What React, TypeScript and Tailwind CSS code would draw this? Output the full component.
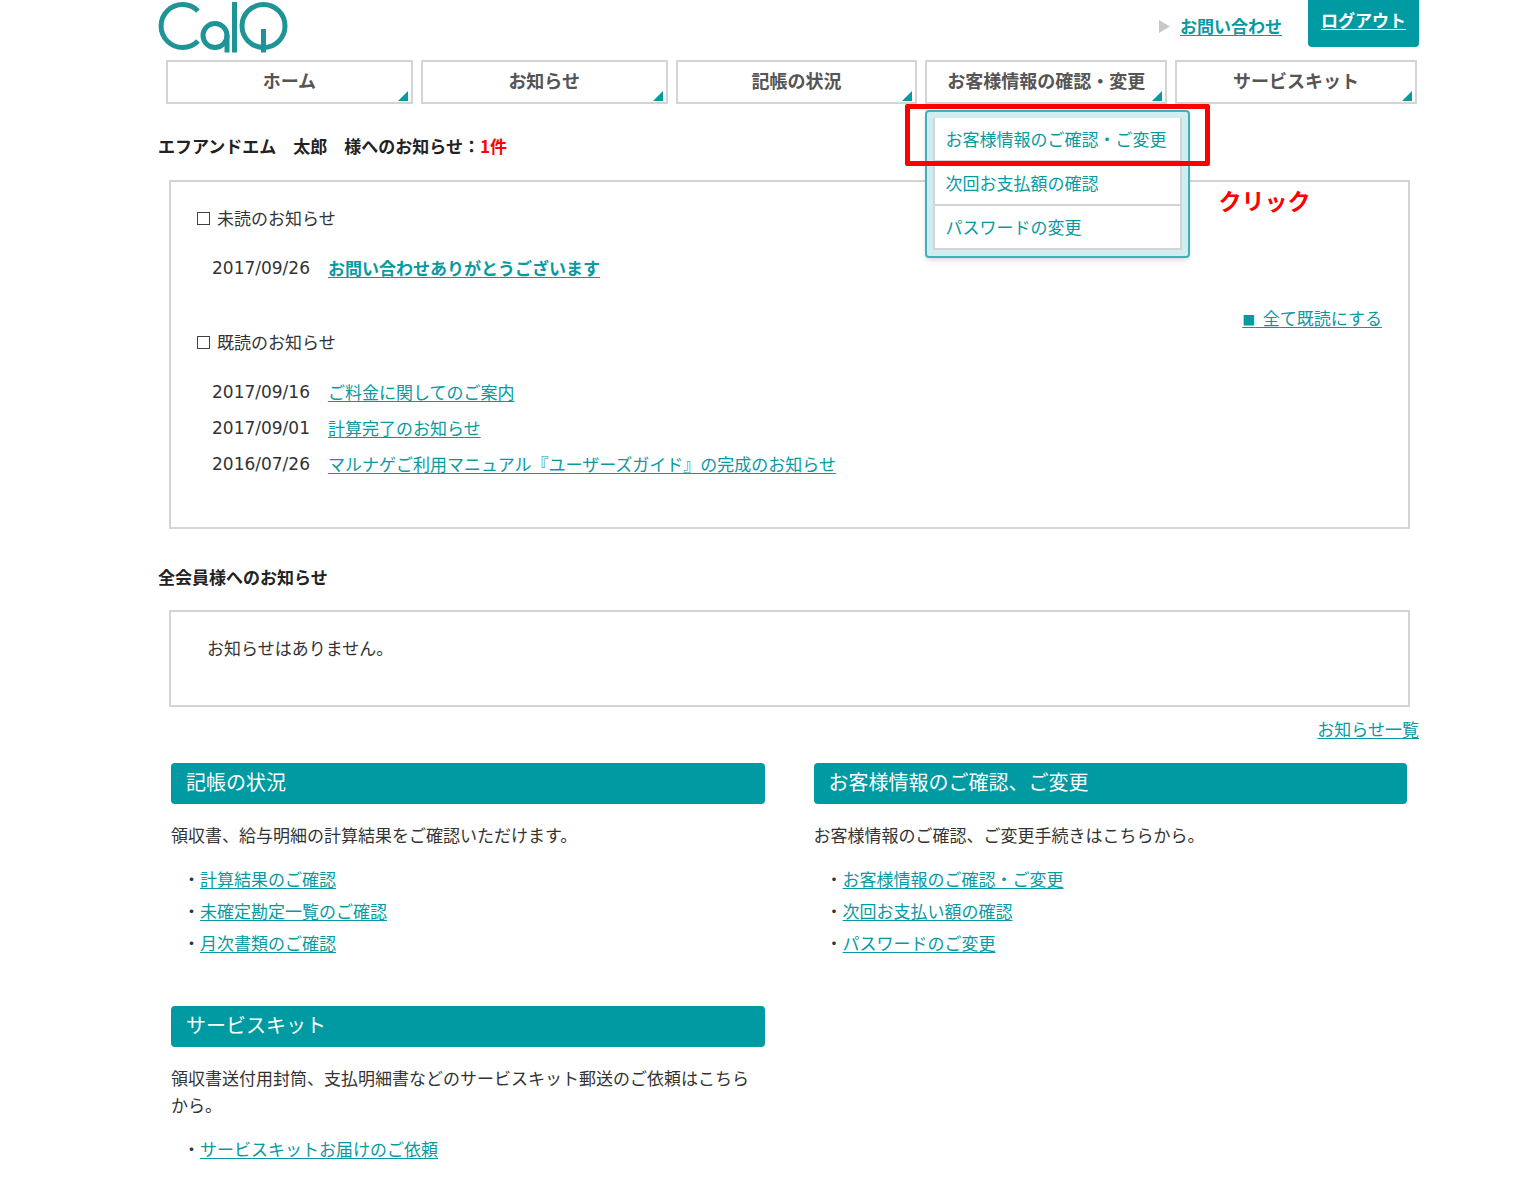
import type { ReactNode } from "react";

type Notice = { date: string; title: string };

const readNotices: Notice[] = [
  { date: "2017/09/16", title: "ご料金に関してのご案内" },
  { date: "2017/09/01", title: "計算完了のお知らせ" },
  { date: "2016/07/26", title: "マルナゲご利用マニュアル『ユーザーズガイド』の完成のお知らせ" },
];

const customerMenu = ["お客様情報のご確認・ご変更", "次回お支払額の確認", "パスワードの変更"];

const link = "text-[#089aa0] underline decoration-1 underline-offset-2";

function Logo() {
  return (
    <svg width="130" height="53" viewBox="0 0 130 53" fill="none" stroke="#1f9496" strokeWidth="5" role="img" aria-label="CalQ">
      <path d="M40 11A21.5 21.5 0 1 0 40 41" />
      <circle cx="57" cy="35.5" r="12" />
      <path d="M69 35v17.5" />
      <path d="M76.5 2v50.5" />
      <circle cx="105.5" cy="26" r="21.5" />
      <path d="M105.5 29v23.5" />
    </svg>
  );
}

function NavItem({ label, children }: { label: string; children?: ReactNode }) {
  return (
    <li className="relative">
      <a href="#" className="relative block h-11 border-2 border-[#d4d4d4] text-center text-[18px] leading-9 font-bold whitespace-nowrap text-[#555]">
        {label}
        <svg className="absolute right-[3px] bottom-px" width="10" height="10" viewBox="0 0 10 10" aria-hidden="true">
          <path d="M10 0v10H0z" fill="#089aa0" />
        </svg>
      </a>
      {children}
    </li>
  );
}

function CustomerMenu() {
  return (
    <>
      <ul className="absolute top-[50px] left-0 z-10 w-[265px] rounded border-2 border-[#3db3b8] bg-[#d0eef0] p-1.5 shadow-md">
        {customerMenu.map((m) => (
          <li key={m} className="h-11 border-x-2 border-b-2 border-[#d4d4d4] bg-white pl-2.5">
            <a href="#" className="text-[17px] leading-[42px] whitespace-nowrap text-[#089aa0]">{m}</a>
          </li>
        ))}
      </ul>
      <div className="pointer-events-none absolute top-11 -left-5 z-20 h-[62px] w-[305px] rounded-xs border-5 border-[#ff0000]" />
      <span className="absolute top-[124px] left-[293px] z-20 text-[23px] leading-8 font-bold whitespace-nowrap text-[#ff0000]">クリック</span>
    </>
  );
}

function NoticeHeading({ children }: { children: ReactNode }) {
  return (
    <h2 className="flex items-center gap-[7px] leading-6">
      <span className="size-[13px] border border-[#444]" />
      {children}
    </h2>
  );
}

function NoticeRow({ date, title, unread }: Notice & { unread?: boolean }) {
  return (
    <li className="flex leading-9">
      <time className="w-[116px] shrink-0 font-['DejaVu_Sans']">{date}</time>
      <a href="#" className={unread ? `${link} font-bold` : link}>{title}</a>
    </li>
  );
}

function Section({ title, text, links }: { title: string; text: string; links: string[] }) {
  return (
    <section>
      <h2 className="h-[41px] rounded bg-[#009aa2] px-[15px] text-[20px] leading-[38px] text-white">{title}</h2>
      <p className="mt-[17px] leading-[27px]">{text}</p>
      <ul className="mt-[15px] ml-3">
        {links.map((l) => (
          <li key={l} className="leading-8">
            ・<a href="#" className={link}>{l}</a>
          </li>
        ))}
      </ul>
    </section>
  );
}

export default function App() {
  return (
    <div lang="ja" className="min-h-screen bg-white pr-[121px] pl-[158px] font-['Noto_Sans_CJK_JP',sans-serif] text-[17px] text-[#333]">
      <header>
        <div className="flex h-[60px] items-start justify-between">
          <a href="#"><Logo /></a>
          <div className="flex items-start">
            <svg className="mt-5 mr-2.5" width="11" height="13" viewBox="0 0 11 13" aria-hidden="true">
              <path d="M0 0l11 6.5L0 13z" fill="#c8c8c8" />
            </svg>
            <a href="#" className={`${link} mt-3.5 mr-[26px] leading-6 font-bold`}>お問い合わせ</a>
            <a href="#" className="h-[47px] rounded-b bg-[#009aa2] px-[13px] pt-2 leading-6 font-bold text-white underline underline-offset-2">ログアウト</a>
          </div>
        </div>
        <nav>
          <ul className="mr-0.5 ml-2 grid grid-cols-[247fr_247fr_242fr_242fr_242fr] gap-2">
            <NavItem label="ホーム" />
            <NavItem label="お知らせ" />
            <NavItem label="記帳の状況" />
            <NavItem label="お客様情報の確認・変更">
              <CustomerMenu />
            </NavItem>
            <NavItem label="サービスキット" />
          </ul>
        </nav>
      </header>

      <main>
        <h1 className="mt-[30px] leading-6 font-bold text-[#222]">
          エフアンドエム　太郎　様へのお知らせ：<span className="text-[#ff0000]">1件</span>
        </h1>
        <div className="mt-[22px] mr-[9px] ml-[11px] border-2 border-[#d4d4d4] px-[26px] pt-6 pb-[45px]">
          <NoticeHeading>未読のお知らせ</NoticeHeading>
          <ul className="mt-5 ml-[15px]">
            <NoticeRow date="2017/09/26" title="お問い合わせありがとうございます" unread />
          </ul>
          <div className="mt-5 text-right leading-6">
            <a href="#" className={link}><span className="text-[13px] leading-none">■</span>&nbsp;&nbsp;全て既読にする</a>
          </div>
          <NoticeHeading>既読のお知らせ</NoticeHeading>
          <ul className="mt-5 ml-[15px]">
            {readNotices.map((n) => <NoticeRow key={n.date} {...n} />)}
          </ul>
        </div>

        <h1 className="mt-9 leading-6 font-bold text-[#222]">全会員様へのお知らせ</h1>
        <div className="mt-[21px] mr-[9px] ml-[11px] border-2 border-[#d4d4d4] px-9 pt-6 pb-[45px]">
          <p className="leading-6">お知らせはありません。</p>
        </div>
        <div className="mt-2.5 text-right leading-6">
          <a href="#" className={link}>お知らせ一覧</a>
        </div>

        <div className="mt-[22px] mr-3 ml-[13px] grid grid-cols-2 gap-x-[49px] gap-y-[47px] pb-9">
          <Section
            title="記帳の状況"
            text="領収書、給与明細の計算結果をご確認いただけます。"
            links={["計算結果のご確認", "未確定勘定一覧のご確認", "月次書類のご確認"]}
          />
          <Section
            title="お客様情報のご確認、ご変更"
            text="お客様情報のご確認、ご変更手続きはこちらから。"
            links={["お客様情報のご確認・ご変更", "次回お支払い額の確認", "パスワードのご変更"]}
          />
          <Section
            title="サービスキット"
            text="領収書送付用封筒、支払明細書などのサービスキット郵送のご依頼はこちらから。"
            links={["サービスキットお届けのご依頼"]}
          />
        </div>
      </main>
    </div>
  );
}
